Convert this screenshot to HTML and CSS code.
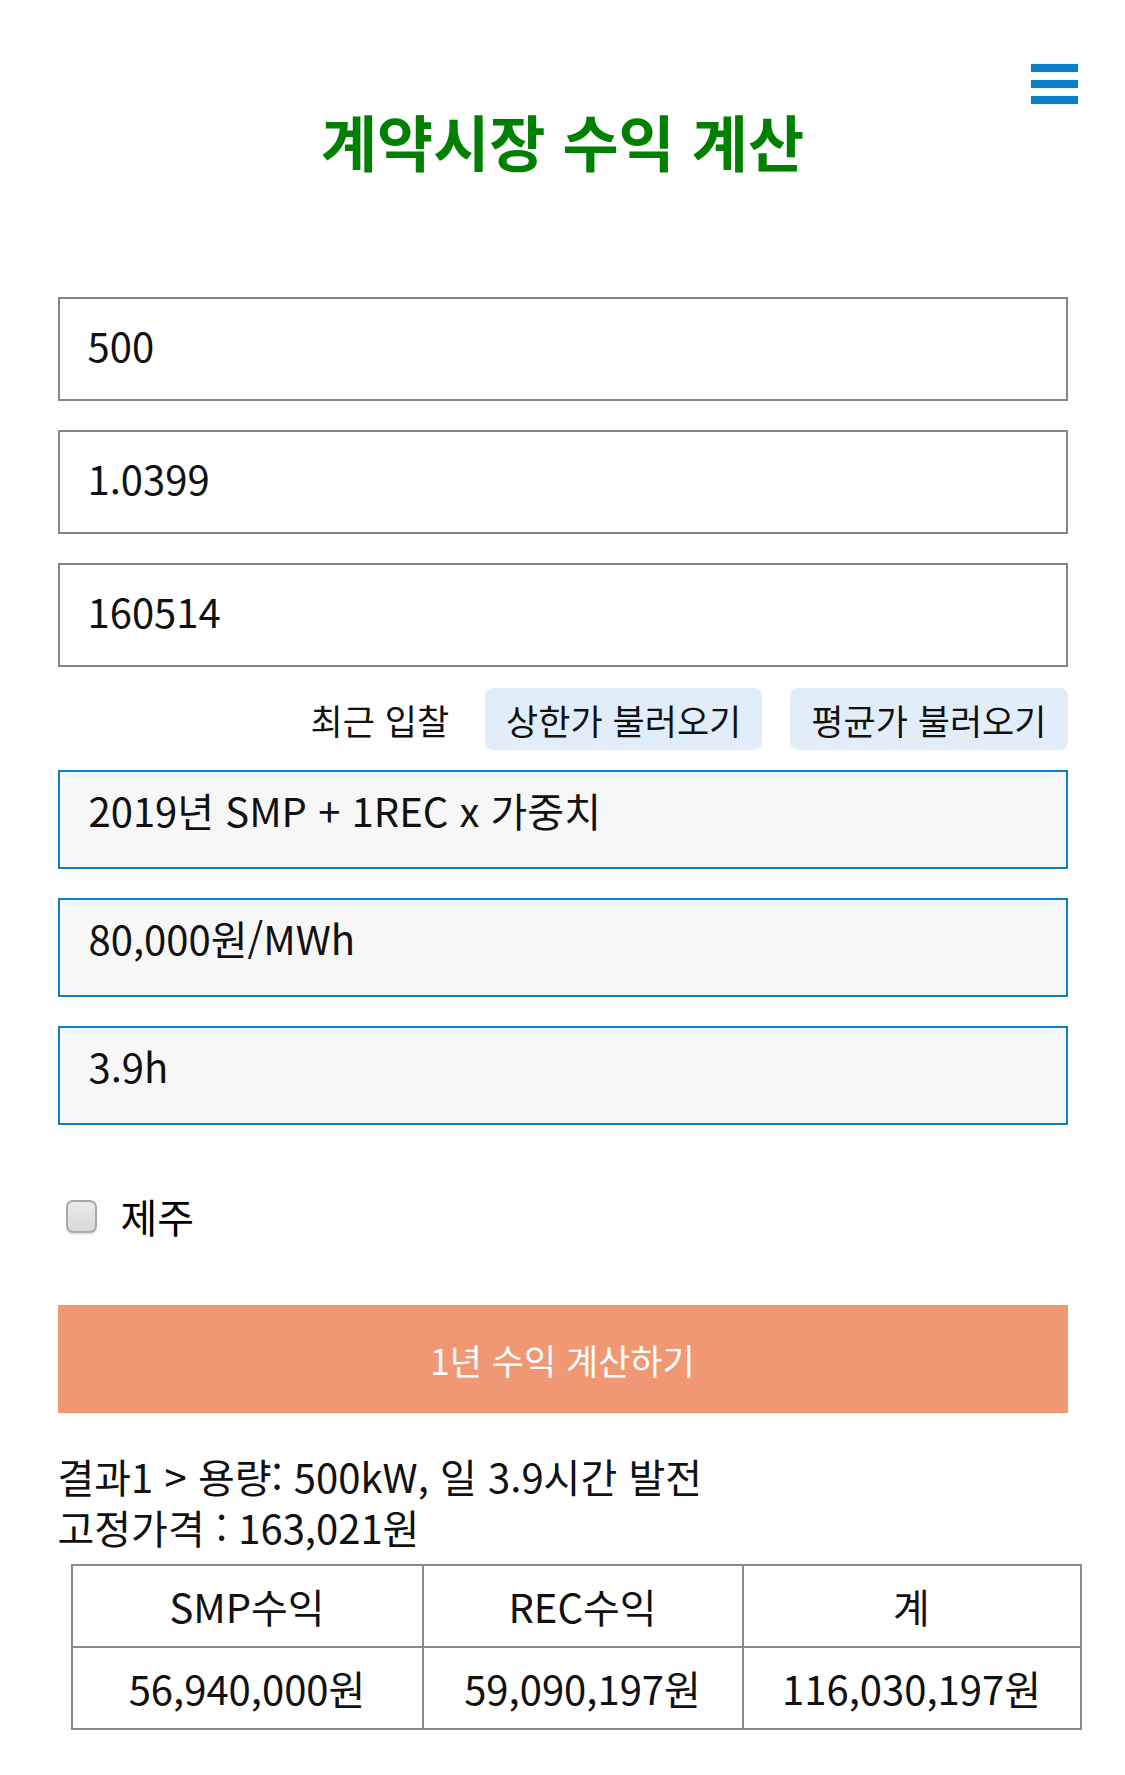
FILE: index.html
```html
<!DOCTYPE html>
<html lang="ko">
<head>
<meta charset="utf-8">
<title>계약시장 수익 계산</title>
<link rel="stylesheet" href="styles.css">
</head>
<body>
<header class="header">
  <h1 class="title">계약시장 수익 계산</h1>
  <a class="menu" href="#" aria-label="menu">
    <span class="menu-bar"></span>
    <span class="menu-bar"></span>
    <span class="menu-bar"></span>
  </a>
</header>
<main class="content">
  <div class="fields">
    <input class="field" type="text" value="500">
    <input class="field" type="text" value="1.0399">
    <input class="field" type="text" value="160514">
  </div>
  <div class="bid-row">
    <span class="bid-label">최근 입찰</span>
    <button class="bid-btn" type="button">상한가 불러오기</button>
    <button class="bid-btn" type="button">평균가 불러오기</button>
  </div>
  <div class="selects">
    <div class="select">2019년 SMP + 1REC x 가중치</div>
    <div class="select">80,000원/MWh</div>
    <div class="select">3.9h</div>
  </div>
  <label class="check-row">
    <input class="check" type="checkbox">
    <span class="check-text">제주</span>
  </label>
  <button class="calc-btn" type="button">1년 수익 계산하기</button>
  <div class="result">
    <div class="result-line">결과1 &gt; 용량: 500kW, 일 3.9시간 발전</div>
    <div class="result-line">고정가격 : 163,021원</div>
  </div>
  <table class="table">
    <colgroup>
      <col class="col-a">
      <col class="col-b">
      <col class="col-c">
    </colgroup>
    <tr>
      <th>SMP수익</th>
      <th>REC수익</th>
      <th>계</th>
    </tr>
    <tr>
      <td>56,940,000원</td>
      <td>59,090,197원</td>
      <td>116,030,197원</td>
    </tr>
  </table>
</main>
</body>
</html>
```
FILE: styles.css
```css
* { box-sizing: border-box; }
body {
  margin: 0;
  font-family: "Noto Sans CJK KR", "Noto Sans", sans-serif;
  color: #111;
  background: #fff;
}
.header {
  position: relative;
  padding-top: 101px;
  height: 297px;
}
.title {
  margin: 0;
  text-align: center;
  font-size: 61px;
  line-height: 80px;
  font-weight: 700;
  color: #008000;
}
.menu {
  position: absolute;
  top: 64px;
  left: 1031px;
  width: 47px;
  display: flex;
  flex-direction: column;
  gap: 8px;
}
.menu-bar {
  display: block;
  height: 8px;
  background: #0a7fc5;
  box-shadow: 0 0 1px #7fc0e8;
}
.content {
  width: 1010px;
  margin: 0 auto;
}
.fields {
  display: flex;
  flex-direction: column;
  gap: 29px;
}
.field {
  display: block;
  width: 100%;
  height: 104px;
  margin: 0;
  padding: 0 0 8px 28px;
  border: 2px solid #858585;
  border-radius: 0;
  background: #fff;
  font-family: inherit;
  font-size: 40px;
  color: #111;
  outline: none;
}
.bid-row {
  display: flex;
  justify-content: flex-end;
  align-items: center;
  height: 62px;
  margin: 21px 0 20px;
}
.bid-label {
  font-size: 35px;
  margin-right: 36px;
}
.bid-btn {
  height: 62px;
  padding: 0 21px;
  border: none;
  border-radius: 8px;
  background: #e1eef9;
  font-family: inherit;
  font-size: 35px;
  color: #111;
}
.bid-btn + .bid-btn { margin-left: 28px; }
.selects {
  display: flex;
  flex-direction: column;
  gap: 29px;
}
.select {
  height: 99px;
  padding: 6px 0 0 29px;
  border: 2px solid #0b7fc6;
  background: #f7f7f7;
  font-size: 40px;
  line-height: 64px;
}
.check-row {
  display: flex;
  align-items: center;
  height: 40px;
  margin: 71px 0 0;
}
.check {
  appearance: none;
  -webkit-appearance: none;
  width: 31px;
  height: 33px;
  margin: 0 24px 0 8px;
  border: 2px solid #a8a8a8;
  border-radius: 7px;
  background: linear-gradient(#e9e9e9, #d9d9d9);
  box-shadow: 0 2px 1px #e6e6e6;
}
.check-text {
  font-size: 40px;
  color: #000;
}
.calc-btn {
  display: block;
  width: 100%;
  height: 108px;
  margin-top: 69px;
  border: none;
  background: #f09874;
  color: #fff;
  font-family: inherit;
  font-size: 35px;
}
.result {
  margin: 38px 0 0;
  font-size: 40px;
  color: #111;
}
.result-line {
  height: 51px;
  line-height: 51px;
}
.table {
  width: 1009px;
  margin: 11px 0 0 13px;
  border-collapse: collapse;
  table-layout: fixed;
  font-size: 40px;
}
.col-a { width: 351px; }
.col-b { width: 320px; }
.col-c { width: 338px; }
.table th,
.table td {
  border: 2px solid #8a8a8a;
  height: 82px;
  text-align: center;
  font-weight: 400;
  padding: 0;
}
```
